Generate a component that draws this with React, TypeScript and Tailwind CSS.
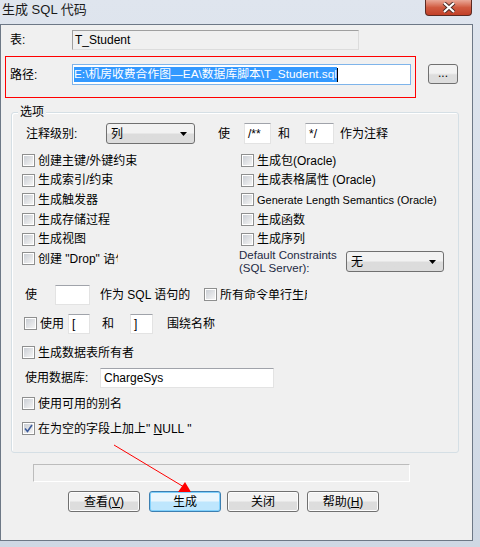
import React from "react";

const Check = ({ checked = false }: { checked?: boolean }) => {
  return (
    <div className="w-[13px] h-[13px] border border-[#8e8f8f] bg-white p-[1px] shrink-0">
      <div className="w-full h-full bg-gradient-to-br from-[#cbcfd5] to-[#f4f4f4] flex items-center justify-center">
        {checked && (
          <svg width="9" height="9" viewBox="0 0 9 9">
            <path d="M1 4.5 L3.5 7.5 L8 1" stroke="#3b5a9a" strokeWidth="1.6" fill="none" />
          </svg>
        )}
      </div>
    </div>
  );
};

const CheckRow = ({ label, checked = false, className = "" }: { label: React.ReactNode; checked?: boolean; className?: string }) => {
  return (
    <div className={"flex items-center gap-[3px] " + className}>
      <Check checked={checked} />
      <div className="whitespace-nowrap leading-none">{label}</div>
    </div>
  );
};

const Select = ({ value, className = "" }: { value: string; className?: string }) => {
  return (
    <div
      className={
        "h-[21px] border border-[#707070] rounded-[3px] bg-gradient-to-b from-[#f2f2f2] from-45% to-[#dcdcdc] to-55% flex items-center justify-between pl-[4px] pr-[7px] " +
        className
      }
    >
      <span className="leading-none">{value}</span>
      <svg width="7" height="4" viewBox="0 0 7 4">
        <path d="M0 0 L7 0 L3.5 4 Z" fill="#000" />
      </svg>
    </div>
  );
};

const Input = ({ value = "", className = "" }: { value?: string; className?: string }) => {
  return (
    <div
      className={
        "h-[20px] border border-[#abadb3] border-t-[#a0a3aa] bg-white flex items-center px-[3px] leading-none whitespace-nowrap " +
        className
      }
    >
      {value}
    </div>
  );
};

const Btn = ({ children, focus = false, className = "" }: { children: React.ReactNode; focus?: boolean; className?: string }) => {
  return (
    <div
      className={
        "w-[72px] h-[21px] rounded-[3px] border flex items-center justify-center leading-none " +
        (focus
          ? "border-[#3c7fb1] bg-gradient-to-b from-[#eaf6fd] from-45% to-[#bee6fd] to-55% shadow-[inset_0_0_0_1px_#7fd0fc] "
          : "border-[#707070] bg-gradient-to-b from-[#f2f2f2] from-45% to-[#dddddd] to-55% shadow-[inset_0_0_0_1px_#fcfcfc] ") +
        className
      }
    >
      {children}
    </div>
  );
};

const App = () => {
  return (
    <div className="w-[480px] h-[547px] relative overflow-hidden bg-gradient-to-b from-[#dfe5ee] to-[#cfd8e4] text-[12px] text-black font-['Liberation_Sans','Noto_Sans_CJK_SC',sans-serif]">
      {/* title bar */}
      <div className="h-[24px] flex items-start justify-between">
        <div className="pl-[2px] pt-[2px] text-[13px] leading-[16px] text-[#1a1a1a]">生成 SQL 代码</div>
        <div className="mr-[8px] w-[47px] h-[16px] rounded-b-[4px] border border-t-0 border-[#5c2a22] bg-gradient-to-b from-[#e9a898] via-[#d05a40] to-[#c24028] flex items-center justify-center">
          <svg width="14" height="11" viewBox="0 0 14 11">
            <path d="M2 1 L12 10 M12 1 L2 10" stroke="#4a2a26" strokeWidth="4" />
            <path d="M2 1 L12 10 M12 1 L2 10" stroke="#fff" strokeWidth="2.2" />
          </svg>
        </div>
      </div>

      {/* client area */}
      <div className="w-[473px] h-[517px] border border-[#6d7886] bg-[#f0f0f0] flex flex-col">
        {/* table */}
        <div className="mt-[5px] ml-[9px] flex items-center h-[20px]">
          <div className="w-[62px]">表:</div>
          <div className="w-[287px] h-[20px] border border-[#a0a0a0] border-b-[#dcdcdc] border-r-[#dcdcdc] bg-[#f0f0f0] flex items-center px-[2px] leading-none">
            T_Student
          </div>
        </div>

        {/* path */}
        <div className="mt-[6px] flex items-start">
          <div className="ml-[4px] w-[411px] h-[42px] border border-[#ff0000] flex items-start pt-[7px] pl-[4px]">
            <div className="w-[62px] h-[21px] flex items-center">路径:</div>
            <div className="w-[339px] h-[21px] border border-[#7eb4ea] bg-white flex items-center pl-[1px] leading-none whitespace-nowrap">
              <span className="bg-[#3399ff] text-white py-[2px] text-[11.8px]">E:\机房收费合作图—EA\数据库脚本\T_Student.sql</span>
              <span className="w-[1px] h-[14px] bg-black" />
            </div>
          </div>
          <div className="ml-[12px] mt-[8px] w-[30px] h-[20px] rounded-[3px] border border-[#707070] bg-gradient-to-b from-[#f2f2f2] from-45% to-[#dddddd] to-55% flex items-center justify-center leading-none pb-[3px]">
            ...
          </div>
        </div>

        {/* options group */}
        <div className="mt-[14px] ml-[10px] w-[448px] h-[341px] relative border border-[#d5dfe5] rounded-[3px] shadow-[inset_1px_1px_0_#fff] flex flex-col">
          <div className="absolute -top-[9px] left-[6px] px-[2px] bg-[#f0f0f0] leading-[16px]">选项</div>

          {/* comment row */}
          <div className="mt-[10px] ml-[14px] flex items-center h-[21px]">
            <div className="w-[80px]">注释级别:</div>
            <Select value="列" className="w-[89px]" />
            <div className="ml-[23px]">使</div>
            <Input value="/**" className="ml-[14px] w-[27px] h-[21px] border-[#e3e3e3]" />
            <div className="ml-[7px]">和</div>
            <Input value="*/" className="ml-[15px] w-[29px] h-[21px] border-[#e3e3e3]" />
            <div className="ml-[6px]">作为注释</div>
          </div>

          {/* checkbox grid */}
          <div className="mt-[7px] flex">
            <div className="ml-[10px] w-[219px] flex flex-col">
              <CheckRow label="创建主键/外键约束" className="h-[19.6px]" />
              <CheckRow label="生成索引/约束" className="h-[19.6px]" />
              <CheckRow label="生成触发器" className="h-[19.6px]" />
              <CheckRow label="生成存储过程" className="h-[19.6px]" />
              <CheckRow label="生成视图" className="h-[19.6px]" />
              <CheckRow
                label={<div className="w-[80px] overflow-hidden">创建 "Drop" 语句</div>}
                className="h-[19.6px]"
              />
            </div>
            <div className="w-[210px] flex flex-col">
              <CheckRow label="生成包(Oracle)" className="h-[19.6px]" />
              <CheckRow label="生成表格属性 (Oracle)" className="h-[19.6px]" />
              <CheckRow label={<span className="text-[11px]">Generate Length Semantics (Oracle)</span>} className="h-[19.6px]" />
              <CheckRow label="生成函数" className="h-[19.6px]" />
              <CheckRow label="生成序列" className="h-[19.6px]" />
              <div className="h-[26px] flex items-center -ml-[2px]">
                <div className="w-[107px] text-[11.5px] leading-[13px] text-[#1e2a44]">
                  Default Constraints
                  <br />
                  (SQL Server):
                </div>
                <Select value="无" className="w-[98px]" />
              </div>
            </div>
          </div>

          {/* terminator row */}
          <div className="mt-[10px] ml-[13px] flex items-center h-[20px]">
            <div className="w-[30px]">使</div>
            <Input className="w-[35px] border-[#e3e3e3]" />
            <div className="ml-[10px] w-[104px] whitespace-nowrap">作为 SQL 语句的</div>
            <CheckRow label={<div className="w-[87px] overflow-hidden">所有命令单行生成</div>} />
          </div>

          {/* quote row */}
          <div className="mt-[9px] ml-[12px] flex items-center h-[20px]">
            <Check />
            <div className="ml-[3px] w-[28px]">使用</div>
            <Input value="[" className="w-[22px] border-[#e3e3e3]" />
            <div className="ml-[12px]">和</div>
            <Input value="]" className="ml-[16px] w-[23px] border-[#e3e3e3]" />
            <div className="ml-[14px]">围绕名称</div>
          </div>

          <CheckRow label="生成数据表所有者" className="mt-[9px] ml-[10px] h-[20px]" />

          <div className="mt-[5px] ml-[13px] flex items-center h-[20px]">
            <div className="w-[75px]">使用数据库:</div>
            <Input value="ChargeSys" className="w-[174px] border-[#e3e3e3]" />
          </div>

          <CheckRow label="使用可用的别名" className="mt-[6px] ml-[10px] h-[20px]" />
          <CheckRow
            checked
            label={
              <span>
                在为空的字段上加上" <span className="underline">N</span>ULL "
              </span>
            }
            className="mt-[5px] ml-[10px] h-[20px]"
          />
        </div>

        {/* progress */}
        <div className="mt-[11px] ml-[32px] w-[377px] h-[18px] border border-[#bcbcbc] border-b-white border-r-white bg-[#f0f0f0]" />

        {/* buttons */}
        <div className="mt-[9px] ml-[67px] flex items-center">
          <Btn>
            查看(<span className="underline">V</span>)
          </Btn>
          <Btn focus className="ml-[9px]">
            生成
          </Btn>
          <Btn className="ml-[6px]">关闭</Btn>
          <Btn className="ml-[8px]">
            帮助(<span className="underline">H</span>)
          </Btn>
        </div>
      </div>

      {/* red annotation arrow */}
      <svg className="absolute top-0 left-0 pointer-events-none" width="480" height="547">
        <line x1="114" y1="445" x2="184" y2="487" stroke="#ff0000" strokeWidth="1" />
        <polygon points="178,492 191,492 185,482" fill="#ff0000" />
      </svg>
    </div>
  );
};

export default App;
